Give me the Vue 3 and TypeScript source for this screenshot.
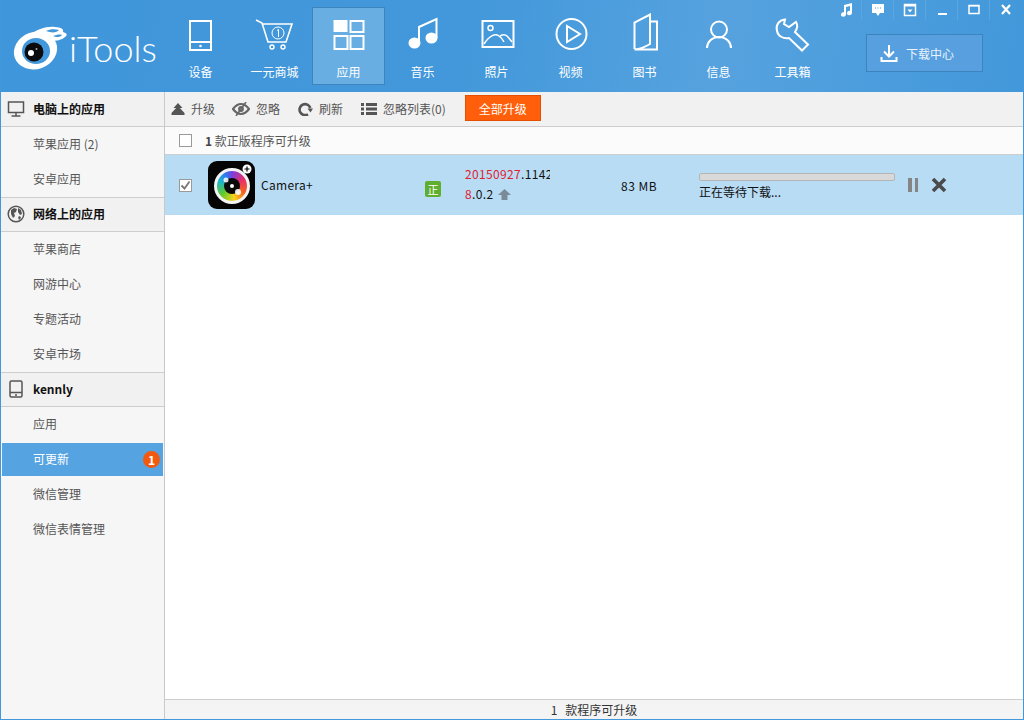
<script setup lang="ts">
interface NavItem { label: string; key: string; active?: boolean }
const nav: NavItem[] = [
  { label: '设备', key: 'device' },
  { label: '一元商城', key: 'cart' },
  { label: '应用', key: 'apps', active: true },
  { label: '音乐', key: 'music' },
  { label: '照片', key: 'photo' },
  { label: '视频', key: 'video' },
  { label: '图书', key: 'book' },
  { label: '信息', key: 'user' },
  { label: '工具箱', key: 'tool' }
]
</script>

<template>
  <div class="win">
    <header class="head">
      <div class="logo">
        <svg width="58" height="50" viewBox="0 0 58 50" class="logo-mark">
          <path d="M17 9C24 3 34 0 42 1c6 .5 9 2 8 5 4 1 5 3 2 5-3 3-9 4-14 4l-8-5z" fill="#fff"/>
          <path d="M33 5c4-2 9-2 13-1-2 3-8 3-13 1zM40 10c3-1 7-2 9-1-1 2-6 3-9 1z" fill="#4298da"/>
          <ellipse cx="22.500" cy="24.500" rx="22" ry="18.500" fill="#fff" transform="rotate(-20 22.500 24.500)"/>
          <ellipse cx="23" cy="25" rx="14" ry="13" fill="#4298da"/>
          <circle cx="21" cy="26" r="9.500" fill="#0b0b0e"/>
          <circle cx="18" cy="27" r="3" fill="#fff"/>
          <circle cx="23.500" cy="23" r="1" fill="#aaa"/>
        </svg>
        <span class="logo-text">iTools</span>
      </div>
      <nav class="nav">
        <div v-for="n in nav" :key="n.key" class="nav-item" :class="{ active: n.active }">
          <svg width="50" height="44" viewBox="0 0 50 44" class="nav-ico">
            <g v-if="n.key === 'device'" fill="none" stroke="#fff" stroke-width="2">
              <rect x="14" y="8" width="21" height="29"/>
              <path d="M14 29h21"/>
              <circle cx="24.500" cy="33" r="1.300" fill="#fff" stroke="none"/>
            </g>
            <g v-else-if="n.key === 'cart'" fill="none" stroke="#fff" stroke-width="1.600">
              <path d="M6 7l6 3 6 19h18l6-18H13"/>
              <circle cx="28" cy="20" r="6" stroke-width="1"/>
              <path d="M27 17.500l1.500-1v7.500" stroke-width="1"/>
              <circle cx="22" cy="34" r="2" stroke-width="1.400"/>
              <circle cx="33" cy="34" r="2" stroke-width="1.400"/>
            </g>
            <g v-else-if="n.key === 'apps'">
              <rect x="9.500" y="7" width="14" height="12" fill="#fff"/>
              <g fill="none" stroke="#fff" stroke-width="2">
                <rect x="26.500" y="8" width="13" height="11"/>
                <rect x="10.500" y="23" width="13" height="13"/>
                <rect x="26.500" y="23" width="13" height="13"/>
              </g>
            </g>
            <g v-else-if="n.key === 'music'" fill="#fff">
              <ellipse cx="16.500" cy="30" rx="6" ry="5.500"/>
              <ellipse cx="33.500" cy="25" rx="6" ry="5.500"/>
              <path d="M21 30V14l17.500-8v19" fill="none" stroke="#fff" stroke-width="2"/>
            </g>
            <g v-else-if="n.key === 'photo'" fill="none" stroke="#fff" stroke-width="2">
              <rect x="10.500" y="8" width="31" height="26"/>
              <circle cx="18.500" cy="15" r="2.500" stroke-width="1.500"/>
              <path d="M12 31c5-8 11-11 15-8 3 2 4 4 5 6M27 24c3-3 7-3 9 0l4 5" stroke-width="1.500"/>
            </g>
            <g v-else-if="n.key === 'video'" fill="none" stroke="#fff" stroke-width="2">
              <circle cx="25.500" cy="21" r="15"/>
              <path d="M21 13v16l13-8z"/>
            </g>
            <g v-else-if="n.key === 'book'" fill="none" stroke="#fff" stroke-width="2">
              <path d="M14.500 36V9.500L30 1.500V31c-5 3-10 5-15.500 5.500H37V8.500h-7"/>
            </g>
            <g v-else-if="n.key === 'user'" fill="none" stroke="#fff" stroke-width="2">
              <circle cx="25" cy="16.500" r="8"/>
              <path d="M13 35c0-6 5-11 12-11s12 5 12 11"/>
            </g>
            <g v-else fill="none" stroke="#fff" stroke-width="2">
              <path d="M17 6.500C11 7 7.500 12 9 18c1 5 6 8 12 7l13 12.500 6-6L27 19c2-3 3-7 1-10l-7 5-5-3z"/>
            </g>
          </svg>
          <span class="nav-label">{{ n.label }}</span>
        </div>
      </nav>
      <button class="dl">
        <svg width="18" height="18" viewBox="0 0 18 18" fill="none" stroke="#fff" stroke-width="2">
          <path d="M9 1v11M4 7.500l5 5 5-5M1.500 13v4h15v-4"/>
        </svg>
        <span>下载中心</span>
      </button>
      <div class="ctrls">
        <div class="c"><svg width="14" height="14" viewBox="0 0 14 14" fill="#fff"><path d="M5 2l8-2v10a2.500 2.200 0 1 1-2-2.200V3L7 4v7.500A2.500 2.200 0 1 1 5 9.300z"/></svg></div>
        <div class="c"><svg width="14" height="14" viewBox="0 0 14 14"><path d="M1 1h12v9H9l-2 3-2-3H1z" fill="#fff"/><path d="M4 5h1M6.500 5h1M9 5h1" stroke="#4298da"/></svg></div>
        <div class="c"><svg width="14" height="14" viewBox="0 0 14 14"><rect x="1.500" y="1.500" width="11" height="11" fill="none" stroke="#fff" stroke-width="1.500"/><rect x="1.500" y="1.500" width="11" height="2" fill="#fff"/><path d="M4.500 6.500h5L7 9.500z" fill="#fff"/></svg></div>
        <div class="c"><svg width="14" height="14" viewBox="0 0 14 14"><rect x="3" y="10" width="9" height="2" fill="#fff"/></svg></div>
        <div class="c"><svg width="14" height="14" viewBox="0 0 14 14"><rect x="2" y="2.500" width="10" height="8" fill="none" stroke="#fff" stroke-width="1.500"/><rect x="2" y="2" width="10" height="1.500" fill="#fff"/></svg></div>
        <div class="c last"><svg width="14" height="14" viewBox="0 0 14 14"><path d="M3 2l8 9M11 2l-8 9" stroke="#fff" stroke-width="2.200"/></svg></div>
      </div>
    </header>

    <div class="body">
      <aside class="side">
        <div class="group first">
          <svg width="18" height="18" viewBox="0 0 18 18" fill="none" stroke="#555" stroke-width="1.500"><rect x="1.500" y="2" width="15" height="10.500"/><path d="M9 12.500v3M4.500 16h9"/></svg>
          <span>电脑上的应用</span>
        </div>
        <div class="item">苹果应用 (2)</div>
        <div class="item">安卓应用</div>
        <div class="group">
          <svg width="18" height="18" viewBox="0 0 18 18"><circle cx="9" cy="9" r="7.800" fill="none" stroke="#555" stroke-width="1.500"/><path d="M4 5l3-2 3 1-1 3-2 1 1 3-2 2-2-4zM11 3l3 2 1 4-2 1-2-3zM11 12l2-1 1 2-2 2z" fill="#555"/></svg>
          <span>网络上的应用</span>
        </div>
        <div class="item">苹果商店</div>
        <div class="item">网游中心</div>
        <div class="item">专题活动</div>
        <div class="item">安卓市场</div>
        <div class="group">
          <svg width="18" height="18" viewBox="0 0 18 18" fill="none" stroke="#555" stroke-width="1.500"><rect x="3" y="1" width="12" height="16" rx="1.500"/><path d="M3 12.500h12M8 15h2"/></svg>
          <span>kennly</span>
        </div>
        <div class="item">应用</div>
        <div class="item sel">可更新<span class="badge">1</span></div>
        <div class="item">微信管理</div>
        <div class="item">微信表情管理</div>
      </aside>

      <main class="main">
        <div class="toolbar">
          <div class="tool">
            <svg width="14" height="12" viewBox="0 0 14 12" fill="#555"><path d="M7 0l4.500 5h-9zM7 3l6.500 7H.5z"/><rect x=".5" y="10" width="13" height="2"/></svg>
            <span>升级</span>
          </div>
          <div class="tool">
            <svg width="18" height="14" viewBox="0 0 18 14" fill="none" stroke="#666" stroke-width="2.200"><path d="M1 7c3-4 5-5 8-5s5 1 8 5c-3 4-5 5-8 5S4 11 1 7z"/><circle cx="9" cy="7" r="1.800"/><path d="M14 0L4 14" stroke-width="1.600"/></svg>
            <span>忽略</span>
          </div>
          <div class="tool wide">
            <svg width="16" height="14" viewBox="0 0 16 14" fill="none"><path d="M11 12.300A5.500 5.500 0 1 1 13.300 6" stroke="#555" stroke-width="2.600"/><path d="M10.500 6.500H16L13.500 10.500z" fill="#555"/></svg>
            <span>刷新</span>
          </div>
          <div class="tool">
            <svg width="16" height="12" viewBox="0 0 16 12" fill="#555"><rect width="3" height="3"/><rect x="5" width="11" height="3"/><rect y="4.500" width="3" height="3"/><rect x="5" y="4.500" width="11" height="3"/><rect y="9" width="3" height="3"/><rect x="5" y="9" width="11" height="3"/></svg>
            <span>忽略列表(0)</span>
          </div>
          <button class="all">全部升级</button>
        </div>
        <div class="subbar">
          <span class="cb"></span>
          <span class="sub-text"><b>1</b> 款正版程序可升级</span>
        </div>
        <div class="row">
          <span class="cb checked">
            <svg width="11" height="11" viewBox="0 0 11 11" fill="none" stroke="#777" stroke-width="1.800"><path d="M1.500 5.500l3 3 5-7"/></svg>
          </span>
          <div class="app">
            <div class="lens"></div>
            <div class="pupil"></div>
            <svg class="dots" width="47" height="48" viewBox="0 0 47 48">
              <circle cx="18" cy="19" r="2.500" fill="#fff" opacity="0.850"/>
              <circle cx="24" cy="25" r="2" fill="#fff"/>
              <circle cx="30" cy="31" r="3" fill="#fff" opacity="0.900"/>
              <circle cx="39" cy="8" r="4.500" fill="#fff"/>
              <path d="M36.500 8h5M39 5.500v5" stroke="#000" stroke-width="1.200"/>
            </svg>
          </div>
          <span class="name">Camera+</span>
          <span class="zheng">正</span>
          <div class="ver">
            <div class="ver1"><em>20150927</em>.11428</div>
            <div class="ver2"><em>8</em>.0.2
              <svg width="13" height="11" viewBox="0 0 13 11"><path d="M6.500 0L13 6H9.500v5h-6V6H0z" fill="#7b8a99"/></svg>
            </div>
          </div>
          <span class="size">83 MB</span>
          <div class="prog">
            <div class="track"></div>
            <div class="wait">正在等待下载...</div>
          </div>
          <span class="pause"><i></i><i></i></span>
          <svg class="x" width="16" height="16" viewBox="0 0 16 16"><path d="M2 2l12 12M14 2L2 14" stroke="#4a4a4a" stroke-width="3.600"/></svg>
        </div>
        <div class="blank"></div>
        <footer class="foot"><span>1</span><span>款程序可升级</span></footer>
      </main>
    </div>
  </div>
</template>

<style>
html, body { margin: 0; padding: 0; }
</style>

<style scoped>
.win {
  width: 1024px;
  height: 720px;
  box-sizing: border-box;
  display: flex;
  flex-direction: column;
  overflow: hidden;
  background: #fff;
  border: solid #4298da;
  border-width: 0 1px 1px 1px;
  font-family: "Noto Sans CJK SC", "Noto Sans", sans-serif;
  font-size: 12px;
  color: #555;
}
.head {
  position: relative;
  height: 92px;
  flex: none;
  display: flex;
  background: linear-gradient(100deg, #4096da 0%, #4298da 45%, #56a2df 70%, #4298da 100%);
}
.logo {
  width: 163px;
  flex: none;
  display: flex;
  align-items: center;
  padding: 10px 0 0 12px;
  box-sizing: border-box;
  color: #fff;
}
.logo-mark { flex: none; }
.logo-text {
  font-family: Lato, sans-serif;
  font-weight: 300;
  font-size: 36px;
  line-height: 40px;
  margin: -7px 0 0 -2px;
}
.nav { display: flex; }
.nav-item {
  width: 73px;
  height: 78px;
  margin: 7px 1px 0 0;
  box-sizing: border-box;
  display: flex;
  flex-direction: column;
  align-items: center;
  padding-top: 5px;
  color: #fff;
  border: 1px solid transparent;
}
.nav-item.active { background: #69aee3; border-color: #3c84bd; }
.nav-ico { flex: none; display: block; }
.nav-label { line-height: 16px; margin-top: 7px; font-size: 12px; }
.dl {
  margin: 34px 0 0 36px;
  width: 117px;
  height: 38px;
  box-sizing: border-box;
  display: flex;
  align-items: center;
  padding: 0 0 0 13px;
  gap: 8px;
  background: #579fdf;
  border: 1px solid #3c84bd;
  color: #e8f3fc;
  font-family: inherit;
  font-size: 12px;
}
.ctrls {
  position: absolute;
  top: 0;
  right: 1px;
  display: flex;
}
.c {
  width: 32px;
  height: 20px;
  box-sizing: border-box;
  display: flex;
  align-items: center;
  justify-content: center;
  border-right: 1px solid #5aa6e0;
}
.c.last { border-right: 0; }
.body { flex: 1; display: flex; min-height: 0; }
.side {
  width: 164px;
  flex: none;
  box-sizing: border-box;
  background: #f6f6f6;
  border-right: 1px solid #c9c9c9;
}
.group {
  height: 35px;
  box-sizing: border-box;
  display: flex;
  align-items: center;
  padding: 0 0 2px 6px;
  gap: 8px;
  background: #f1f1f1;
  border-top: 1px solid #cdcdcd;
  border-bottom: 1px solid #cdcdcd;
  font-weight: 700;
  color: #111;
  font-size: 12px;
}
.group.first { border-top: 0; padding-bottom: 1px; }
.item {
  height: 35px;
  box-sizing: border-box;
  display: flex;
  align-items: center;
  padding: 0 0 2px 32px;
  color: #555;
  position: relative;
}
.item.sel {
  height: 33px;
  margin: 1px 1px 1px 1px;
  padding-left: 31px;
  background: #55a3e0;
  color: #fff;
}
.badge {
  position: absolute;
  right: 3px;
  top: 8px;
  width: 17px;
  height: 17px;
  border-radius: 50%;
  background: #f1590f;
  color: #fff;
  font-weight: 700;
  font-size: 12px;
  line-height: 17px;
  text-align: center;
}
.main { flex: 1; min-width: 0; display: flex; flex-direction: column; }
.toolbar {
  height: 35px;
  flex: none;
  box-sizing: border-box;
  display: flex;
  align-items: center;
  padding: 0 0 1px 6px;
  background: #f1f1f1;
  border-bottom: 1px solid #cdcdcd;
}
.tool {
  display: flex;
  align-items: center;
  gap: 6px;
  margin-right: 17px;
  color: #555;
}
.tool.wide { margin-right: 18px; }
.all {
  width: 76px;
  height: 26px;
  margin: -1px 0 0 2px;
  padding: 0;
  background: #ff5f0a;
  border: 1px solid #e64f00;
  color: #fff;
  font-family: inherit;
  font-size: 12px;
}
.subbar {
  height: 28px;
  flex: none;
  box-sizing: border-box;
  display: flex;
  align-items: center;
  padding: 0 0 1px 14px;
  background: #fbfbfb;
  border-bottom: 1px solid #cdcdcd;
}
.cb {
  width: 13px;
  height: 13px;
  box-sizing: border-box;
  flex: none;
  background: #fff;
  border: 1px solid #9a9a9a;
  display: flex;
  align-items: center;
  justify-content: center;
}
.sub-text { margin-left: 13px; color: #555; }
.sub-text b { color: #444; }
.row {
  height: 60px;
  flex: none;
  display: flex;
  align-items: center;
  padding-left: 14px;
  background: #b9dcf5;
  color: #111;
}
.app {
  position: relative;
  width: 47px;
  height: 48px;
  margin-left: 16px;
  flex: none;
  background: #040404;
  border-radius: 9px;
}
.lens {
  position: absolute;
  left: 6px;
  top: 7px;
  width: 36px;
  height: 36px;
  box-sizing: border-box;
  border: 3px solid #f4f4f4;
  border-radius: 50%;
  background: conic-gradient(#7a3fe0, #e62f6b 60deg, #f5631c 120deg, #f8d31c 170deg, #5fc92e 230deg, #1fb6c8 290deg, #2a7cf0 330deg, #7a3fe0);
}
.pupil {
  position: absolute;
  left: 16px;
  top: 17px;
  width: 16px;
  height: 16px;
  border-radius: 50%;
  background: #0a0a0a;
}
.dots { position: absolute; left: 0; top: 0; }
.name { margin-left: 6px; width: 164px; flex: none; letter-spacing: .3px; margin-top: -1px; }
.zheng {
  width: 16px;
  height: 16px;
  flex: none;
  margin-top: 8px;
  background: #5fae2f;
  color: #fff;
  border-radius: 2px;
  font-size: 11px;
  line-height: 16px;
  text-align: center;
}
.ver {
  width: 85px;
  flex: none;
  margin: 0 0 2px 24px;
  overflow: hidden;
  white-space: nowrap;
  line-height: 20px;
  letter-spacing: .35px;
}
.ver em { font-style: normal; color: #e0202f; }
.ver2 svg { margin-left: 2px; vertical-align: -1px; }
.size { width: 78px; margin-left: 71px; flex: none; letter-spacing: .5px; }
.prog { width: 196px; flex: none; margin-top: 3px; }
.track {
  height: 8px;
  box-sizing: border-box;
  background: #d9d9d9;
  border: 1px solid #b5b5b5;
  border-radius: 2px;
}
.wait { line-height: 16px; margin-top: 3px; color: #111; }
.pause { margin-left: 13px; display: flex; gap: 3px; flex: none; }
.pause i { display: block; width: 3.500px; height: 14px; background: #858585; }
.x { margin-left: 13px; flex: none; }
.blank { flex: 1; min-height: 0; }
.foot {
  height: 20px;
  flex: none;
  box-sizing: border-box;
  display: flex;
  justify-content: center;
  align-items: center;
  gap: 8px;
  background: #f4f4f4;
  border-top: 1px solid #cdcdcd;
  color: #333;
}
</style>
